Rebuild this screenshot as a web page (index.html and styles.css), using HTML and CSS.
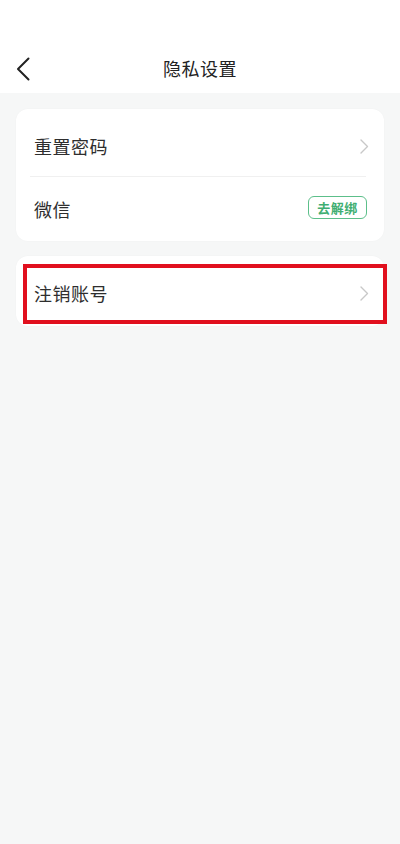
FILE: index.html
```html
<!DOCTYPE html>
<html lang="zh-CN">
<head>
<meta charset="utf-8">
<meta name="viewport" content="width=device-width, initial-scale=1">
<title>隐私设置</title>
<link rel="stylesheet" href="styles.css">
</head>
<body>
<header class="header">
  <div class="nav">
    <span class="back">
      <svg width="14" height="24" viewBox="0 0 14 24"><path d="M12.5 1.5 L2 12 L12.5 22.5" fill="none" stroke="#222" stroke-width="2" stroke-linecap="round" stroke-linejoin="round"/></svg>
    </span>
    <h1 class="title">隐私设置</h1>
  </div>
</header>
<main class="content">
  <section class="card">
    <div class="row row-first">
      <span class="label">重置密码</span>
      <svg class="chev" width="9" height="15" viewBox="0 0 9 15"><path d="M1 1 L7.5 7.5 L1 14" fill="none" stroke="#c8c8c8" stroke-width="1.4" stroke-linecap="round" stroke-linejoin="round"/></svg>
    </div>
    <div class="divider"></div>
    <div class="row row-second">
      <span class="label">微信</span>
      <span class="badge">去解绑</span>
    </div>
  </section>
  <section class="card card-single">
    <div class="row row-single">
      <span class="label">注销账号</span>
      <svg class="chev" width="9" height="15" viewBox="0 0 9 15"><path d="M1 1 L7.5 7.5 L1 14" fill="none" stroke="#c8c8c8" stroke-width="1.4" stroke-linecap="round" stroke-linejoin="round"/></svg>
    </div>
    <div class="highlight"></div>
  </section>
</main>
</body>
</html>
```

FILE: styles.css
```css
* { box-sizing: border-box; }
html, body { margin: 0; padding: 0; }
body {
  width: 400px;
  min-height: 844px;
  background: #f6f7f7;
  font-family: "Noto Sans CJK SC", "Noto Sans", sans-serif;
  color: #333;
}
.header {
  background: #fff;
  padding-top: 44px;
  height: 93px;
}
.nav {
  position: relative;
  height: 48px;
  display: flex;
  align-items: center;
  justify-content: center;
}
.back {
  position: absolute;
  left: 16px;
  top: 13px;
  display: flex;
}
.title {
  margin: 0;
  font-size: 18px;
  font-weight: 400;
  color: #222;
  letter-spacing: 0.5px;
}
.content {
  padding: 16px 16px 0;
  display: flex;
  flex-direction: column;
  gap: 15px;
}
.card {
  background: #fff;
  border-radius: 12px;
  padding: 0 15px 0 18px;
  box-shadow: 0 0 2px rgba(0,0,0,0.03);
}
.row {
  display: flex;
  align-items: center;
  justify-content: space-between;
}
.row-first { height: 67px; padding-top: 7px; }
.row-second { height: 64px; padding-top: 0; }
.row-single { height: 70px; padding-top: 4px; }
.label {
  font-size: 18px;
  color: #2e2e2e;
  letter-spacing: 0.5px;
}
.chev { display: block; }
.divider {
  height: 1px;
  background: #f0f0f0;
  margin-left: -4px;
  margin-right: 3px;
}
.badge {
  width: 59px;
  height: 23px;
  border: 1.5px solid #5cbf8a;
  border-radius: 6px;
  color: #3fae72;
  font-size: 13px;
  font-weight: 700;
  display: flex;
  align-items: center;
  justify-content: center;
  margin-right: 2px;
  margin-top: -4px;
  letter-spacing: 0.5px;
}
.card-single { position: relative; }
.highlight {
  position: absolute;
  left: 7px;
  top: 8px;
  right: -3px;
  bottom: 2px;
  border: 4px solid #e1101e;
  pointer-events: none;
}
```
